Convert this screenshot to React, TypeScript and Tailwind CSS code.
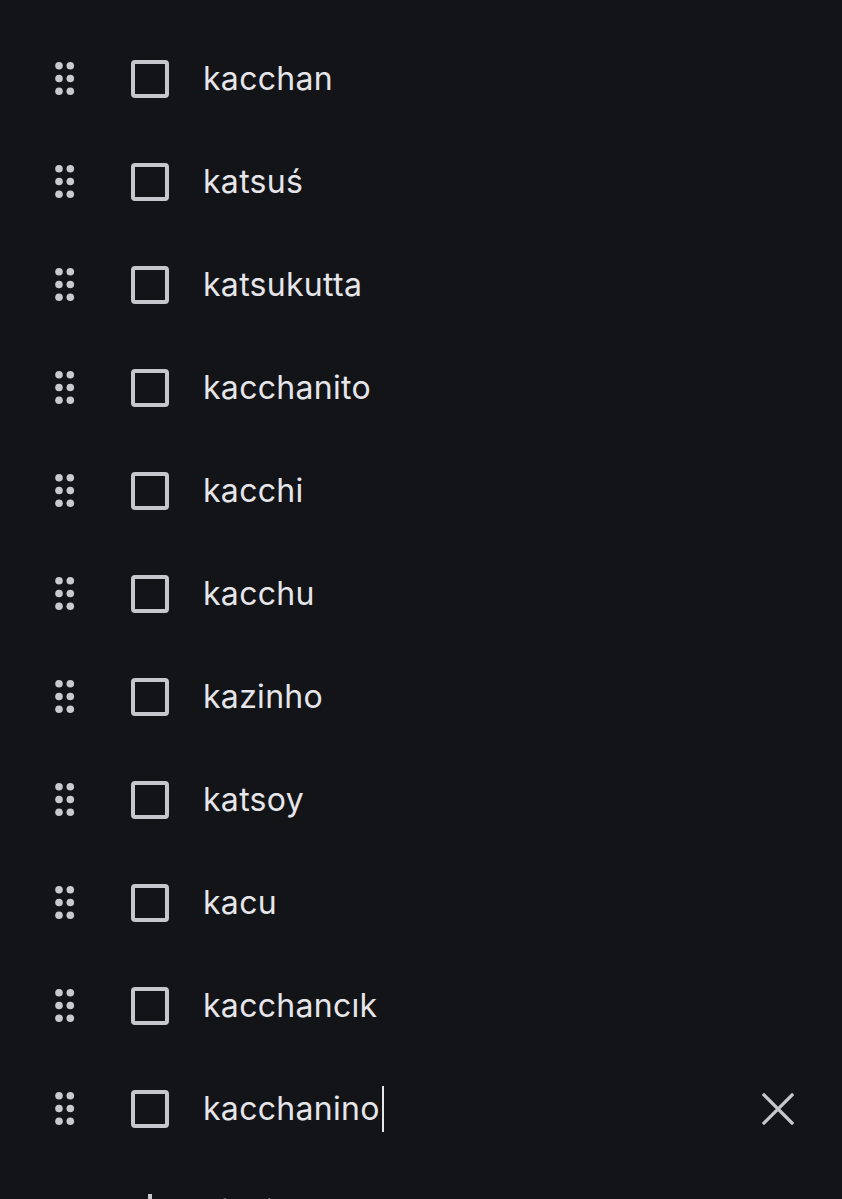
const items = [
  "kacchan",
  "katsuś",
  "katsukutta",
  "kacchanito",
  "kacchi",
  "kacchu",
  "kazinho",
  "katsoy",
  "kacu",
  "kacchancık",
];

function DragHandle() {
  return (
    <svg width="24" height="37" viewBox="0 0 24 37" className="shrink-0">
      {[5.8, 18.5, 31.2].map((cy) => (
        <g key={cy} fill="#c9c9cf">
          <circle cx="6" cy={cy} r="3.8" />
          <circle cx="17.3" cy={cy} r="3.8" />
        </g>
      ))}
    </svg>
  );
}

function Box() {
  return (
    <div className="ml-[54px] h-[38px] w-[38px] shrink-0 rounded-[4px] border-[4px] border-[#c6c7cc]" />
  );
}

function Row({ text, active }: { text: string; active?: boolean }) {
  return (
    <div className="flex h-[103px] items-center pl-[53px] pr-[48px]">
      <DragHandle />
      <Box />
      <div className="ml-[34px] flex flex-1 items-center text-[32px] tracking-[0.3px] text-[#e6e6ea]">
        <span>{text}</span>
        {active && <span className="ml-[2px] h-[46px] w-[2px] bg-[#e6e6ea]" />}
      </div>
      {active && (
        <svg width="32" height="32" viewBox="0 0 32 32" className="shrink-0">
          <path
            d="M2 2L30 30M30 2L2 30"
            stroke="#c6c7cc"
            strokeWidth="3.2"
            strokeLinecap="square"
          />
        </svg>
      )}
    </div>
  );
}

export default function App() {
  return (
    <div
      className="h-[1199px] w-[842px] overflow-hidden bg-[#131418] pt-[27px]"
      style={{ fontFamily: "Inter, 'Noto Sans', sans-serif" }}
    >
      {items.map((t) => (
        <Row key={t} text={t} />
      ))}
      <Row text="kacchanino" active />
      <div className="flex h-[103px] items-center pl-[130px]">
        <svg width="40" height="40" viewBox="0 0 40 40" className="shrink-0">
          <path d="M20 2V38M2 20H38" stroke="#c6c7cc" strokeWidth="4" />
        </svg>
        <span className="ml-[33px] text-[32px] text-[#c6c7cc]">List item</span>
      </div>
    </div>
  );
}
